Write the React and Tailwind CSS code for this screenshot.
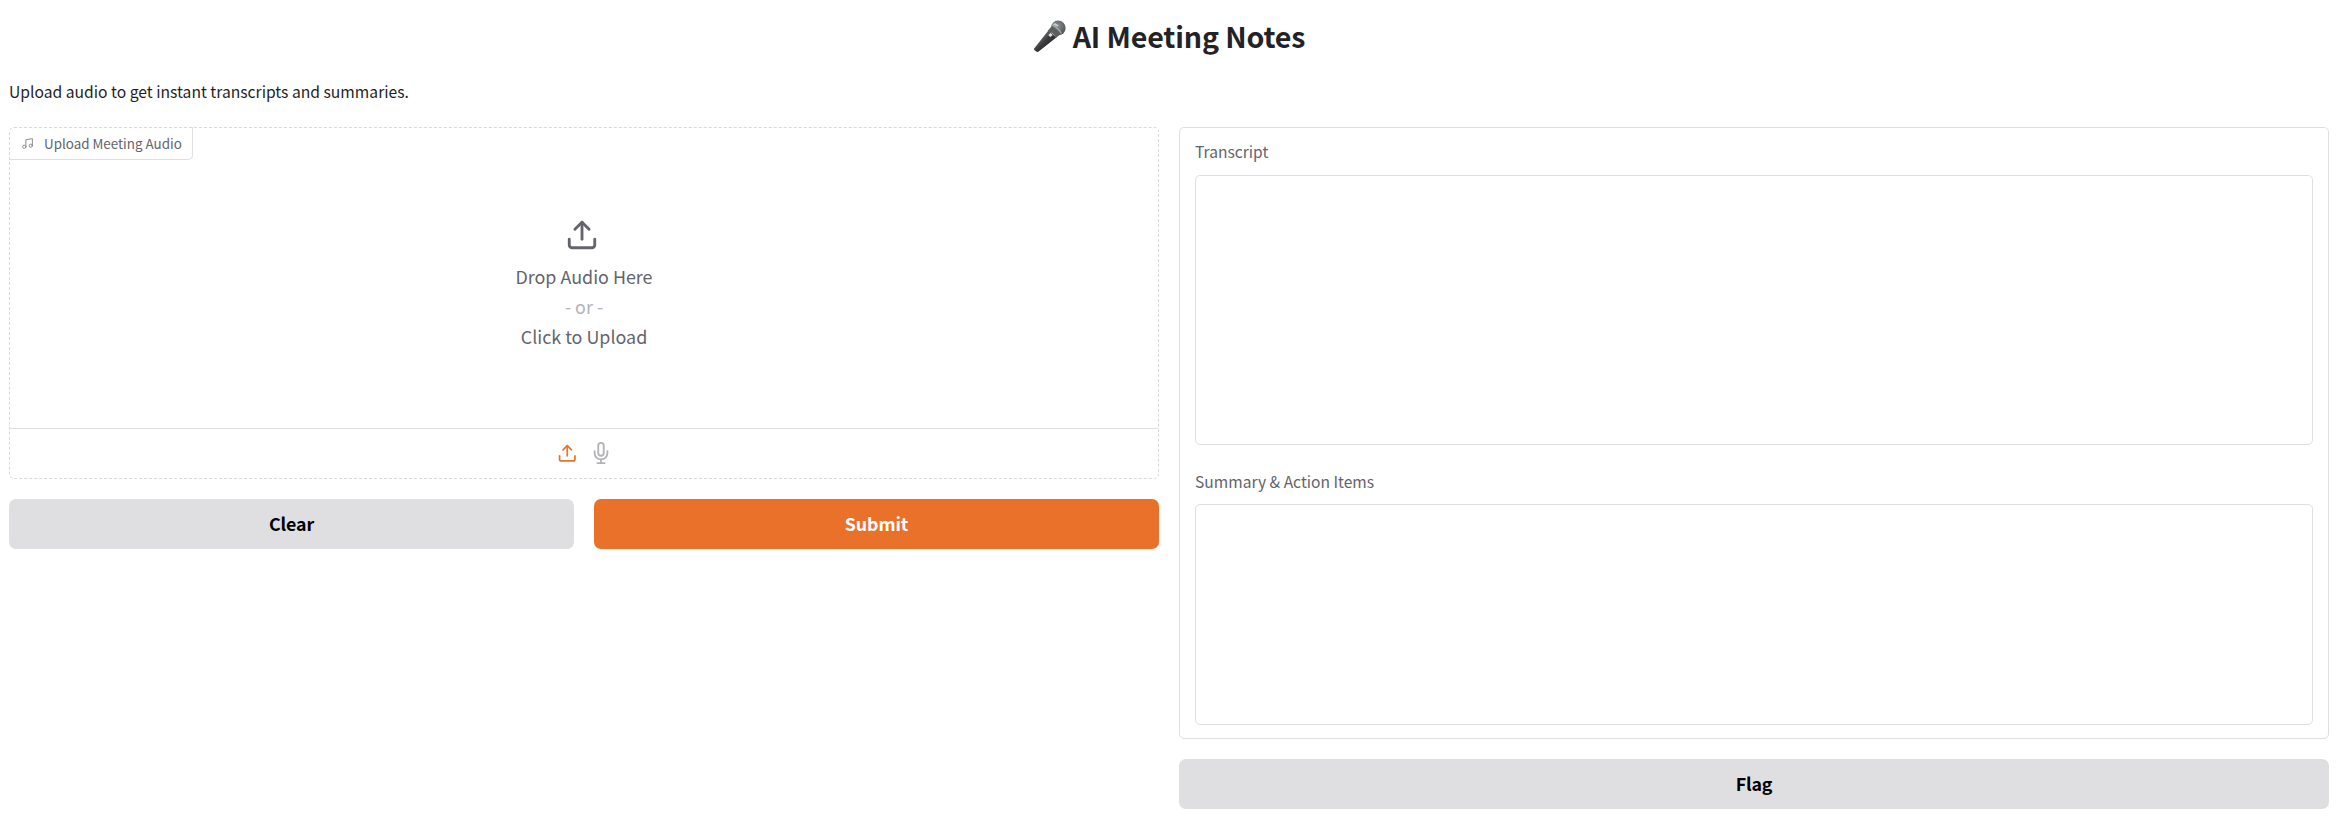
const UploadIcon = ({ className, strokeWidth = 2 }) => (
  <svg viewBox="0 0 24 24" className={className} fill="none" stroke="currentColor" strokeWidth={strokeWidth} strokeLinecap="round" strokeLinejoin="round">
    <path d="M21 15v4a2 2 0 0 1-2 2H5a2 2 0 0 1-2-2v-4" />
    <polyline points="17 8 12 3 7 8" />
    <line x1="12" y1="3" x2="12" y2="15" />
  </svg>
);

const MicIcon = ({ className }) => (
  <svg viewBox="0 0 24 24" className={className} fill="none" stroke="currentColor" strokeWidth="2" strokeLinecap="round" strokeLinejoin="round">
    <path d="M12 1a3 3 0 0 0-3 3v8a3 3 0 0 0 6 0V4a3 3 0 0 0-3-3z" />
    <path d="M19 10v2a7 7 0 0 1-14 0v-2" />
    <line x1="12" y1="19" x2="12" y2="23" />
    <line x1="8" y1="23" x2="16" y2="23" />
  </svg>
);

const MusicIcon = ({ className }) => (
  <svg viewBox="0 0 24 24" className={className} fill="none" stroke="currentColor" strokeWidth="1.7" strokeLinecap="round" strokeLinejoin="round">
    <path d="M9 18V5l12-2v13" />
    <circle cx="6" cy="18" r="3" />
    <circle cx="18" cy="16" r="3" />
  </svg>
);

const Microphone = ({ className }) => (
  <svg viewBox="0 0 34 34" className={className}>
    <defs>
      <linearGradient id="handle" x1="0" y1="0" x2="1" y2="1">
        <stop offset="0.25" stopColor="#777" />
        <stop offset="0.5" stopColor="#3c3c3e" />
        <stop offset="0.8" stopColor="#202022" />
      </linearGradient>
      <radialGradient id="head" cx="0.45" cy="0.35" r="0.7">
        <stop offset="0" stopColor="#8c9091" />
        <stop offset="1" stopColor="#4a4d4e" />
      </radialGradient>
    </defs>
    <path d="M1 29.5 16 10.5 24 18 5.5 32.6Q4 33.4 2.3 31.8 0.4 30.6 1 29.5Z" fill="url(#handle)" />
    <circle cx="26" cy="8.2" r="7.6" fill="url(#head)" />
    <path d="M15.2 11 19 6.8Q25 8.5 27.7 15.3L23.6 18.6Q21 13 15.2 11Z" fill="#5c6062" />
    <path d="M19.6 5.2Q26 7 29.2 14" fill="none" stroke="#a9adae" strokeWidth="1.3" />
    <path d="m20.3 4.5 2.4-1.4 3.8 2.6-1.6 1.1z" fill="#c7d0d4" />
    <path d="m15.8 15.4 2.2-2 2.3 2-2.4 2.2z" fill="#e4e4e4" />
  </svg>
);

const Button = ({ className, children }) => (
  <button className={`flex h-[50px] items-center justify-center rounded-[7px] pb-[2px] text-[17.8px] font-bold leading-[26px] tracking-[-0.1px] ${className}`}>{children}</button>
);

const Field = ({ label, boxClass }) => (
  <label className="flex flex-col px-[15px]">
    <span className="text-[15.6px] leading-[24px] text-[#64646c]">{label}</span>
    <textarea readOnly className={`block w-full resize-none rounded-[5px] border border-[#dfdfe2] bg-white outline-none ${boxClass}`} />
  </label>
);

export default function App() {
  return (
    <main className="h-[829px] w-full bg-white pl-[9px] pr-[23px] font-['Noto_Sans_CJK_SC',sans-serif]">
      <h1 className="flex h-[72px] items-center justify-center pt-px text-[28.6px] font-bold tracking-[-0.14px] text-[#232327]">
        <Microphone className="mr-[7px] h-[33px] w-[33px]" />
        <span>AI Meeting Notes</span>
      </h1>
      <p className="h-[55px] pt-[8px] text-[15.67px] leading-[24px] text-[#1f1f22]">Upload audio to get instant transcripts and summaries.</p>
      <div className="grid grid-cols-2 items-start gap-[20px]">
        <section className="flex flex-col gap-[20px]">
          <div className="flex h-[352px] flex-col rounded-[5px] border border-dashed border-[#d9d9dc]">
            <div className="-ml-px -mt-px flex h-[33px] w-[184px] shrink-0 items-center rounded-br-[5px] border-b border-r border-[#dfdfe2] pl-[12px] text-[13.4px] text-[#64646c]">
              <MusicIcon className="mr-[10px] h-[13px] w-[13px] text-[#85858d]" />
              Upload Meeting Audio
            </div>
            <div className="flex flex-1 flex-col items-center pt-[58px] text-[17.9px] leading-[30px] text-[#64646c]">
              <UploadIcon className="mb-[9px] mr-[4px] h-[34px] w-[34px]" />
              <span>Drop Audio Here</span>
              <span className="text-[#b3b3ba]">- or -</span>
              <span>Click to Upload</span>
            </div>
            <div className="flex h-[50px] items-center justify-center gap-[12px] border-t border-[#dfdfe2] pb-px pl-px">
              <UploadIcon className="h-[20.5px] w-[20.5px] text-[#eb7228]" />
              <MicIcon className="h-[22px] w-[22px] overflow-visible text-[#b3b3ba]" />
            </div>
          </div>
          <div className="grid grid-cols-2 gap-[20px]">
            <Button className="bg-[#dfdfe1] text-black">Clear</Button>
            <Button className="bg-[#ea7129] text-white">Submit</Button>
          </div>
        </section>
        <section className="flex flex-col gap-[20px]">
          <div className="flex h-[612px] flex-col gap-[24px] rounded-[5px] border border-[#dfdfe2] pt-[11px]">
            <Field label="Transcript" boxClass="mt-[12px] h-[270px]" />
            <Field label="Summary & Action Items" boxClass="mt-[11px] h-[221px]" />
          </div>
          <Button className="w-full bg-[#dfdfe1] text-black">Flag</Button>
        </section>
      </div>
    </main>
  );
}
